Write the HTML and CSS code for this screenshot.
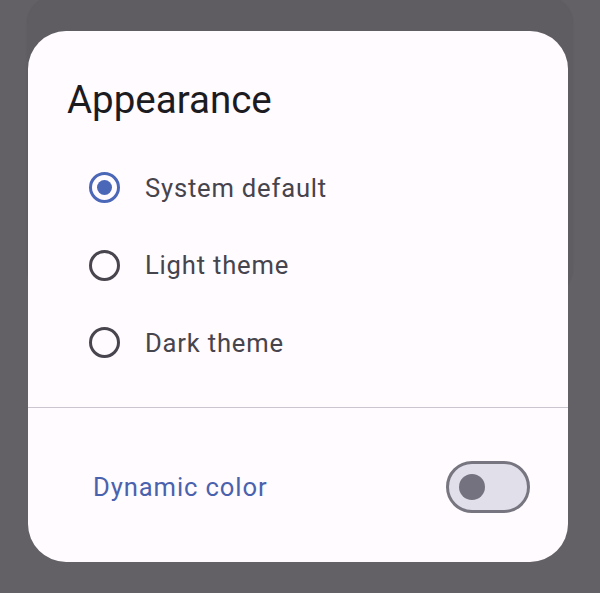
FILE: index.html
```html
<!DOCTYPE html>
<html lang="en">
<head>
<meta charset="utf-8">
<title>Appearance</title>
<link rel="stylesheet" href="styles.css">
</head>
<body>
<div class="screen">
  <div class="backdrop-sheet"></div>
  <div class="dialog">
    <h1 class="title">Appearance</h1>
    <div class="options">
      <div class="option">
        <span class="radio selected"><span class="dot"></span></span>
        <span class="label">System default</span>
      </div>
      <div class="option">
        <span class="radio"></span>
        <span class="label">Light theme</span>
      </div>
      <div class="option">
        <span class="radio"></span>
        <span class="label">Dark theme</span>
      </div>
    </div>
    <div class="divider"></div>
    <div class="switch-row">
      <span class="switch-label">Dynamic color</span>
      <span class="switch"><span class="thumb"></span></span>
    </div>
  </div>
</div>
</body>
</html>
```
FILE: styles.css
```css
* { box-sizing: border-box; }
html, body { margin: 0; padding: 0; }
body {
  width: 600px;
  height: 593px;
  background: #636165;
  font-family: Roboto, "Noto Sans", sans-serif;
  overflow: hidden;
}
.screen {
  position: relative;
  width: 600px;
  height: 593px;
  padding: 31px 32px 0 28px;
}
.backdrop-sheet {
  position: absolute;
  left: 27px;
  top: -4px;
  width: 546px;
  height: 300px;
  border-radius: 28px;
  background: #5f5d61;
  box-shadow: 0 0 2px rgba(0,0,0,0.08);
}
.dialog {
  position: relative;
  width: 540px;
  height: 531px;
  background: #fffbfe;
  border-radius: 38px;
  display: flex;
  flex-direction: column;
  overflow: hidden;
}
.title {
  margin: 0;
  padding: 43px 38px 0 39px;
  font-size: 38.5px;
  font-weight: 400;
  line-height: 51px;
  color: #1c1b1f;
}
.options {
  margin-top: 24px;
  display: flex;
  flex-direction: column;
}
.option {
  height: 77.5px;
  display: flex;
  align-items: center;
  padding-left: 61px;
}
.radio {
  width: 31px;
  height: 31px;
  border-radius: 50%;
  border: 3.4px solid #49454f;
  display: flex;
  align-items: center;
  justify-content: center;
  flex: none;
}
.radio.selected { border-color: #4b67b8; }
.dot {
  width: 15px;
  height: 15px;
  border-radius: 50%;
  background: #4b67b8;
}
.label {
  margin-left: 25px;
  font-size: 25.6px;
  letter-spacing: 0.8px;
  color: #46444c;
  line-height: 32px;
}
.divider {
  margin-top: 25px;
  height: 1.6px;
  background: #cac6d0;
}
.switch-row {
  flex: 1;
  display: flex;
  align-items: center;
  justify-content: space-between;
  padding: 3px 38px 0 65px;
}
.switch-label {
  font-size: 25.6px;
  letter-spacing: 0.9px;
  color: #4a62ad;
  line-height: 32px;
}
.switch {
  width: 84px;
  height: 52px;
  border-radius: 26px;
  border: 3.2px solid #77757f;
  background: #e1e0ea;
  display: flex;
  align-items: center;
  padding-left: 10px;
}
.thumb {
  width: 26px;
  height: 26px;
  border-radius: 50%;
  background: #74727e;
}
```
